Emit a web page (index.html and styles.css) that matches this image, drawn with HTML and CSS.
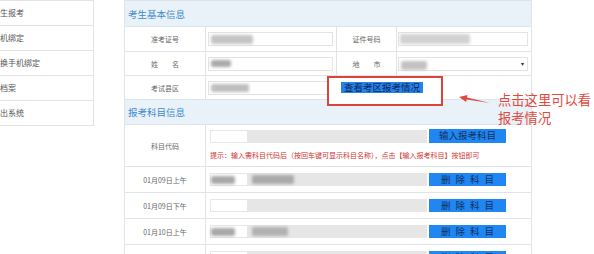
FILE: index.html
```html
<!DOCTYPE html>
<html lang="zh-CN">
<head>
<meta charset="utf-8">
<title>考生报考</title>
<link rel="stylesheet" href="styles.css">
</head>
<body>
<div class="page">
  <nav class="side">
    <a class="side-item">考生报考</a>
    <a class="side-item">手机绑定</a>
    <a class="side-item">更换手机绑定</a>
    <a class="side-item">查档案</a>
    <a class="side-item">退出系统</a>
  </nav>
  <main class="form">
    <div class="sec-head">考生基本信息</div>
    <div class="row r4 first">
      <div class="lab">准考证号</div>
      <div class="val"><div class="inp"><span class="blur b1"></span></div></div>
      <div class="lab">证件号码</div>
      <div class="val v2"><div class="inp"><span class="blur b2"></span></div></div>
    </div>
    <div class="row r4">
      <div class="lab">姓　　名</div>
      <div class="val"><div class="inp"><span class="blur b3"></span></div></div>
      <div class="lab">地　　市</div>
      <div class="val v2"><div class="inp sel"><span class="blur b4"></span><span class="caret">▾</span></div></div>
    </div>
    <div class="row r2">
      <div class="lab">考试县区</div>
      <div class="val area">
        <div class="inp county"><span class="blur b5"></span></div>
        <span class="btn view">查看考区报考情况</span>
        <div class="callout"></div>
      </div>
    </div>
    <div class="sec-head second">报考科目信息</div>
    <div class="row r2 code-row">
      <div class="lab">科目代码</div>
      <div class="val stack">
        <div class="line">
          <div class="code"></div><div class="name"></div><span class="btn act">输入报考科目</span>
        </div>
        <p class="hint">提示：输入需科目代码后（按回车键可显示科目名称），点击【输入报考科目】按钮即可</p>
      </div>
    </div>
    <div class="row r2 course">
      <div class="lab">01月09日上午</div>
      <div class="val">
        <div class="line">
          <div class="code"><span class="blur b6"></span></div><div class="name"><span class="blur b7"></span></div><span class="btn del">删除科目</span>
        </div>
      </div>
    </div>
    <div class="row r2 course">
      <div class="lab">01月09日下午</div>
      <div class="val">
        <div class="line">
          <div class="code"></div><div class="name"></div><span class="btn del">删除科目</span>
        </div>
      </div>
    </div>
    <div class="row r2 course">
      <div class="lab">01月10日上午</div>
      <div class="val">
        <div class="line">
          <div class="code"><span class="blur b6"></span></div><div class="name"><span class="blur b8"></span></div><span class="btn del">删除科目</span>
        </div>
      </div>
    </div>
    <div class="row r2 course">
      <div class="lab">01月10日下午</div>
      <div class="val">
        <div class="line">
          <div class="code"></div><div class="name"></div><span class="btn del">删除科目</span>
        </div>
      </div>
    </div>
  </main>
</div>
<svg class="arrow" viewBox="0 0 40 14" width="40" height="14" aria-hidden="true">
  <polygon points="4,5 12.5,3.1 12.04,5.54 35,11 11.66,7.5 11.2,9.95" fill="#e2483c"/>
</svg>
<div class="note">点击这里可以看<br>报考情况</div>
</body>
</html>
```

FILE: styles.css
```css
* { box-sizing: border-box; margin: 0; padding: 0; }
html, body { background: #fff; overflow: hidden; }
body {
  width: 594px;
  height: 254px;
  position: relative;
  font-family: "Noto Sans CJK SC", "Noto Sans", sans-serif;
}

.page { display: flex; gap: 30px; align-items: flex-start; }

/* sidebar */
.side {
  width: 94px;
  border-top: 1px solid #e3e3e3;
  border-right: 1px solid #e3e3e3;
  display: flex;
  flex-direction: column;
  overflow: hidden;
}
.side-item {
  display: block;
  height: 25px;
  line-height: 24px;
  border-bottom: 1px solid #e3e3e3;
  font-size: 8px;
  color: #555;
  white-space: nowrap;
  text-indent: -8px;
  overflow: hidden;
}

/* form table */
.form {
  width: 408px;
  border: 1px solid #dfe4ea;
  border-bottom: none;
}
.sec-head {
  height: 26px;
  background: #e9f1f9;
  border-bottom: 1px solid #dfe4ea;
  color: #3d8bc9;
  font-size: 9.5px;
  padding-left: 3px;
  display: flex;
  align-items: center;
}
.sec-head.second { height: 25px; }

.row {
  display: grid;
  height: 24px;
  border-bottom: 1px solid #dfe4ea;
}
.row.first { height: 25px; }
.r4 { grid-template-columns: 81px 131px 60px 1fr; }
.r2 { grid-template-columns: 81px 1fr; }
.code-row { height: 42px; }
.course { height: 26px; }

.lab, .val {
  display: flex;
  align-items: center;
  border-right: 1px solid #dfe4ea;
}
.row > :last-child { border-right: none; }
.lab {
  justify-content: center;
  font-size: 7px;
  color: #666;
  white-space: nowrap;
}
.val { padding: 0 3px 0 2px; }
.val.v2 { padding: 0 3px 0 1px; }

.inp {
  width: 100%;
  height: 14px;
  border: 1px solid #e3e3e3;
  background: #fff;
  display: flex;
  align-items: center;
  position: relative;
}
.inp.county { width: 121px; flex: none; }
.caret {
  position: absolute;
  right: 3px;
  top: 1px;
  font-size: 6px;
  color: #333;
  line-height: 10px;
}

.blur { display: block; filter: blur(1.6px); border-radius: 2px; }
.b1 { width: 42px; height: 9px; margin-left: 2px; background: #c4c4c4; }
.b2 { width: 70px; height: 10px; margin-left: 1px; background: #d2d2d2; }
.b3 { width: 20px; height: 7px; margin-left: 2px; background: #a9a9a9; }
.b4 { width: 26px; height: 9px; margin-left: 2px; margin-top: 4px; background: #c2c2c2; }
.b5 { width: 38px; height: 8px; margin-left: 2px; background: #bdbdbd; }
.b6 { width: 24px; height: 8px; margin-left: 0; background: #a8a8a8; }
.b7 { width: 42px; height: 9px; margin-left: 4px; background: #aaaaaa; }
.b8 { width: 36px; height: 9px; margin-left: 4px; background: #b2b2b2; }

/* county row with annotated button */
.area { position: relative; }
.btn {
  display: inline-flex;
  align-items: center;
  justify-content: center;
  white-space: nowrap;
  background: #1f86f2;
  color: #13305e;
  font-size: 9.5px;
  line-height: 1;
  flex: none;
}
.view {
  position: relative;
  z-index: 2;
  margin-left: 12px;
  width: 82px;
  height: 11px;
  background: #2681ea;
  color: #0d2552;
}
.callout {
  position: absolute;
  z-index: 1;
  left: 121px;
  top: 0;
  width: 116px;
  height: 30px;
  border: 2px solid #d9443b;
  background: #fff;
}

/* course rows */
.stack {
  flex-direction: column;
  align-items: flex-start;
  justify-content: flex-start;
  padding: 4px 0 0 4px;
}
.course .val { padding-left: 4px; }
.line { display: flex; align-items: center; }
.code {
  width: 38px;
  height: 13px;
  border: 1px solid #e6e6e6;
  background: #fff;
  display: flex;
  align-items: center;
  overflow: visible;
}
.name {
  width: 179px;
  height: 13px;
  background: #e6e6e6;
  display: flex;
  align-items: center;
}
.btn.act { margin-left: 2px; width: 77px; height: 14px; }
.btn.del { margin-left: 2px; width: 77px; height: 13px; letter-spacing: 5px; padding-left: 5px; }
.hint {
  margin-top: 8px;
  font-size: 7px;
  line-height: 8px;
  color: #d03434;
  white-space: nowrap;
}

/* annotation */
.arrow { position: absolute; left: 455px; top: 92px; }
.note {
  position: absolute;
  left: 498px;
  top: 91px;
  font-size: 13.3px;
  line-height: 18px;
  color: #e2483c;
  white-space: nowrap;
}
```
